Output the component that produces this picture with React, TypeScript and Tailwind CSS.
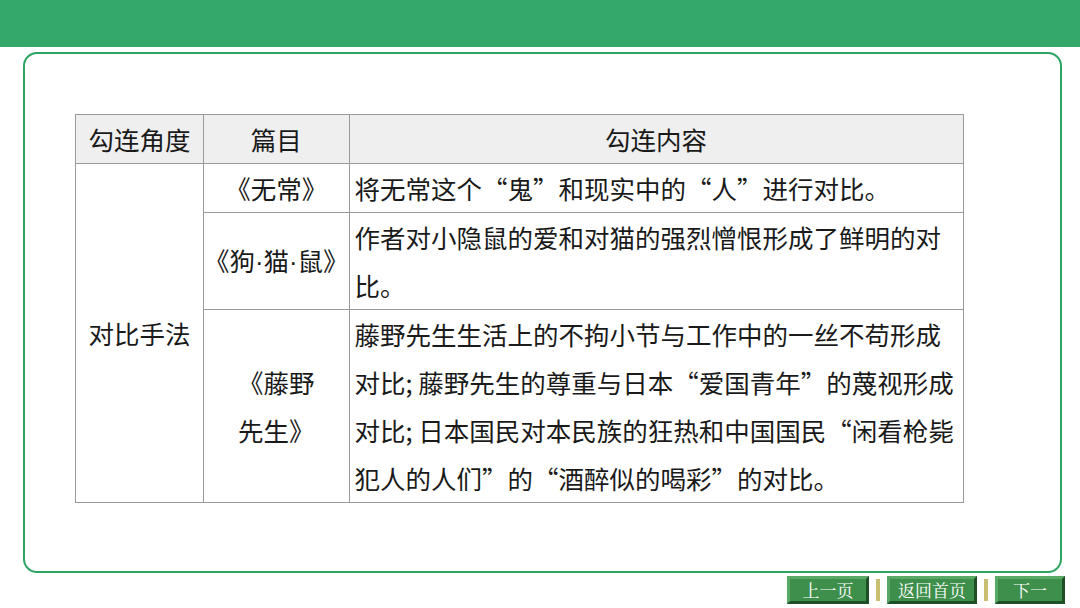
export default function App() {
  const f = { fontFamily: '"Noto Sans CJK SC","Noto Sans",sans-serif' };
  const btn = "h-[28px] flex items-center justify-center text-white text-[17px] bg-[#3f8f4c] border-[3px] border-t-[#5aa866] border-l-[#5aa866] border-b-[#1f4f27] border-r-[#1f4f27]";
  const serif = { fontFamily: '"Noto Serif CJK SC","Noto Sans CJK SC",serif' };
  const cell = "border border-[#9a9a9a]";
  const dot = <span style={{ fontFamily: '"Liberation Sans",sans-serif' }}>·</span>;
  return (
    <div className="w-[1080px] h-[608px] bg-white relative overflow-hidden text-[#1a1a1a]" style={f}>
      <div className="h-[47px] bg-[#34a86a]" />
      <div className="absolute left-[23px] top-[52px] w-[1039px] h-[521px] border-2 border-[#2ea463] rounded-[14px]" />
      <table className="absolute left-[75px] top-[114px] border-collapse text-[25.5px] leading-[48px]">
        <colgroup>
          <col style={{ width: 128 }} />
          <col style={{ width: 145 }} />
          <col style={{ width: 614 }} />
        </colgroup>
        <tbody>
          <tr className="bg-[#efefef] h-[48px]">
            <td className={`${cell} text-center`}>勾连角度</td>
            <td className={`${cell} text-center`}>篇目</td>
            <td className={`${cell} text-center`}>勾连内容</td>
          </tr>
          <tr className="h-[48px]">
            <td rowSpan={3} className={`${cell} text-center`}>对比手法</td>
            <td className={`${cell} text-center`}>《无常》</td>
            <td className={`${cell} px-[5px]`}>将无常这个“鬼”和现实中的“人”进行对比。</td>
          </tr>
          <tr className="h-[97px]">
            <td className={`${cell} text-center whitespace-nowrap`}>《狗{dot}猫{dot}鼠》</td>
            <td className={`${cell} px-[5px]`}>作者对小隐鼠的爱和对猫的强烈憎恨形成了鲜明的对比。</td>
          </tr>
          <tr className="h-[191px]">
            <td className={`${cell} text-center`}>《藤野<br />先生》</td>
            <td className={`${cell} px-[5px]`}>藤野先生生活上的不拘小节与工作中的一丝不苟形成对比; 藤野先生的尊重与日本“爱国青年”的蔑视形成对比; 日本国民对本民族的狂热和中国国民“闲看枪毙犯人的人们”的“酒醉似的喝彩”的对比。</td>
          </tr>
        </tbody>
      </table>
      <div className="absolute left-[787px] top-[576px] flex items-center gap-[7px]" style={serif}>
        <div className={`${btn} w-[82px]`}>上一页</div>
        <div className="w-[4px] h-[22px] bg-[#c8c070]" />
        <div className={`${btn} w-[90px]`}>返回首页</div>
        <div className="w-[4px] h-[22px] bg-[#c8c070]" />
        <div className={`${btn} w-[70px]`}>下一</div>
      </div>
    </div>
  );
}
